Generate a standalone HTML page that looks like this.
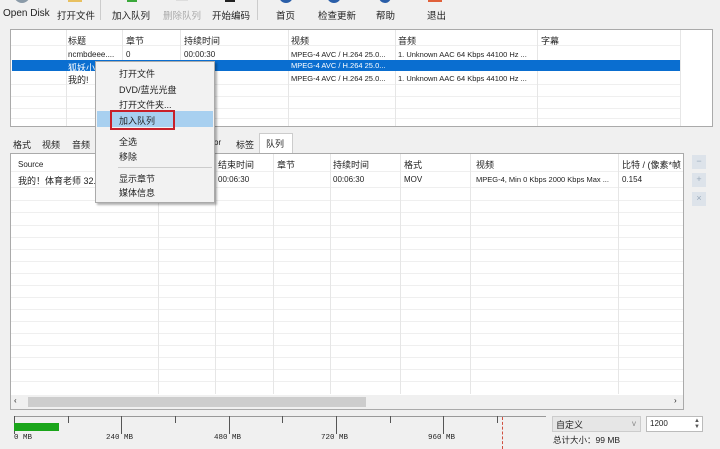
<!DOCTYPE html><html><head><meta charset="utf-8"><style>
*{margin:0;padding:0;box-sizing:border-box}
body{width:720px;height:449px;background:#f0f0f0;font-family:"Liberation Sans","Noto Sans CJK SC",sans-serif;font-size:9px;color:#222;position:relative;overflow:hidden}
.a{position:absolute;white-space:nowrap}
.tb{font-size:9.5px;top:8px}
.vl{position:absolute;width:1px;background:#e6e6e6}
.hl{position:absolute;height:1px;background:#efefef}
</style></head><body>
<!-- toolbar icons (cut off) -->
<div class="a" style="left:14px;top:-6px;width:16px;height:9px;border-radius:0 0 8px 8px;background:#8a9aa8"></div>
<div class="a" style="left:68px;top:-4px;width:14px;height:6px;background:#e8c060"></div>
<div class="a" style="left:127px;top:-4px;width:10px;height:6px;background:#3aa83a"></div>
<div class="a" style="left:176px;top:-4px;width:12px;height:5px;background:#ddd"></div>
<div class="a" style="left:225px;top:-4px;width:10px;height:6px;background:#222"></div>
<div class="a" style="left:279px;top:-6px;width:14px;height:9px;border-radius:0 0 7px 7px;background:#2a5ea8"></div>
<div class="a" style="left:327px;top:-6px;width:14px;height:9px;border-radius:0 0 7px 7px;background:#2a5ea8"></div>
<div class="a" style="left:379px;top:-6px;width:12px;height:9px;border-radius:0 0 6px 6px;background:#2a5ea8"></div>
<div class="a" style="left:428px;top:-4px;width:14px;height:6px;background:#e0603a"></div>
<div class="a tb" style="left:3px;font-size:10px">Open Disk</div>
<div class="a tb" style="left:57px">打开文件</div>
<div class="a" style="left:100px;top:0;width:1px;height:20px;background:#ccc"></div>
<div class="a tb" style="left:112px">加入队列</div>
<div class="a tb" style="left:163px;color:#aaa">删除队列</div>
<div class="a tb" style="left:212px">开始编码</div>
<div class="a" style="left:257px;top:0;width:1px;height:20px;background:#ccc"></div>
<div class="a tb" style="left:276px">首页</div>
<div class="a tb" style="left:318px">检查更新</div>
<div class="a tb" style="left:376px">帮助</div>
<div class="a tb" style="left:427px">退出</div>
<!-- top list -->
<div class="a" style="left:10px;top:29px;width:703px;height:98px;background:#fff;border:1px solid #aaa"></div>
<div class="hl" style="left:11px;top:45px;width:670px"></div>
<div class="hl" style="left:11px;top:84px;width:670px"></div>
<div class="hl" style="left:11px;top:96px;width:670px"></div>
<div class="hl" style="left:11px;top:108px;width:670px"></div>
<div class="hl" style="left:11px;top:118px;width:670px"></div>
<div class="vl" style="left:66px;top:30px;height:96px"></div>
<div class="vl" style="left:122px;top:30px;height:96px"></div>
<div class="vl" style="left:180px;top:30px;height:96px"></div>
<div class="vl" style="left:288px;top:30px;height:96px"></div>
<div class="vl" style="left:395px;top:30px;height:96px"></div>
<div class="vl" style="left:537px;top:30px;height:96px"></div>
<div class="vl" style="left:680px;top:30px;height:96px"></div>
<div class="a" style="left:12px;top:60px;width:668px;height:11px;background:#0a6ed0"></div>
<div class="a" style="left:68px;top:34px">标题</div><div class="a" style="left:126px;top:34px">章节</div><div class="a" style="left:184px;top:34px">持续时间</div><div class="a" style="left:291px;top:34px">视频</div><div class="a" style="left:398px;top:34px">音频</div><div class="a" style="left:541px;top:34px">字幕</div>
<div class="a" style="left:68px;top:50px;font-size:8px">ncmbdeee....</div><div class="a" style="left:126px;top:50px;font-size:8px">0</div><div class="a" style="left:184px;top:50px;font-size:8px">00:00:30</div><div class="a" style="left:291px;top:50px;font-size:7.5px">MPEG-4 AVC / H.264 25.0...</div><div class="a" style="left:398px;top:50px;font-size:7.5px">1. Unknown AAC  64 Kbps 44100 Hz ...</div>
<div class="a" style="left:68px;top:61px;color:#fff">狐妖小</div><div class="a" style="left:291px;top:61px;font-size:7.5px;color:#fff">MPEG-4 AVC / H.264 25.0...</div>
<div class="a" style="left:68px;top:73px">我的!</div><div class="a" style="left:291px;top:74px;font-size:7.5px">MPEG-4 AVC / H.264 25.0...</div><div class="a" style="left:398px;top:74px;font-size:7.5px">1. Unknown AAC  64 Kbps 44100 Hz ...</div>
<!-- tabs -->
<div class="a" style="left:13px;top:138px">格式</div><div class="a" style="left:42px;top:138px">视频</div><div class="a" style="left:72px;top:138px">音频</div><div class="a" style="left:210px;top:138px;font-size:8px">itor</div><div class="a" style="left:236px;top:138px">标签</div>
<div class="a" style="left:259px;top:133px;width:34px;height:20px;background:#fff;border:1px solid #ccc;border-bottom:none;padding:3px 0 0 6px">队列</div>
<!-- queue list -->
<div class="a" style="left:10px;top:153px;width:674px;height:257px;background:#fff;border:1px solid #aaa"></div>
<div class="hl" style="left:11px;top:171px;width:672px"></div>
<div class="hl" style="left:11px;top:187px;width:672px"></div>
<div class="hl" style="left:11px;top:200px;width:672px"></div>
<div class="hl" style="left:11px;top:212px;width:672px"></div>
<div class="hl" style="left:11px;top:225px;width:672px"></div><div class="hl" style="left:11px;top:237px;width:672px"></div><div class="hl" style="left:11px;top:249px;width:672px"></div><div class="hl" style="left:11px;top:261px;width:672px"></div><div class="hl" style="left:11px;top:273px;width:672px"></div><div class="hl" style="left:11px;top:285px;width:672px"></div><div class="hl" style="left:11px;top:297px;width:672px"></div><div class="hl" style="left:11px;top:309px;width:672px"></div><div class="hl" style="left:11px;top:321px;width:672px"></div><div class="hl" style="left:11px;top:333px;width:672px"></div><div class="hl" style="left:11px;top:345px;width:672px"></div><div class="hl" style="left:11px;top:357px;width:672px"></div><div class="hl" style="left:11px;top:369px;width:672px"></div><div class="hl" style="left:11px;top:381px;width:672px"></div>
<div class="vl" style="left:158px;top:154px;height:240px"></div><div class="vl" style="left:215px;top:154px;height:240px"></div><div class="vl" style="left:273px;top:154px;height:240px"></div><div class="vl" style="left:330px;top:154px;height:240px"></div><div class="vl" style="left:400px;top:154px;height:240px"></div><div class="vl" style="left:470px;top:154px;height:240px"></div><div class="vl" style="left:618px;top:154px;height:240px"></div>
<div class="a" style="left:18px;top:160px;font-size:8px">Source</div><div class="a" style="left:218px;top:158px">结束时间</div><div class="a" style="left:277px;top:158px">章节</div><div class="a" style="left:333px;top:158px">持续时间</div><div class="a" style="left:404px;top:158px">格式</div><div class="a" style="left:476px;top:158px">视频</div><div class="a" style="left:622px;top:158px">比特 / (像素*帧</div>
<div class="a" style="left:18px;top:174px">我的！体育老师 32.m</div><div class="a" style="left:218px;top:175px;font-size:8px">00:06:30</div><div class="a" style="left:333px;top:175px;font-size:8px">00:06:30</div><div class="a" style="left:404px;top:175px;font-size:8px">MOV</div><div class="a" style="left:476px;top:175px;font-size:7.5px">MPEG-4, Min 0 Kbps 2000 Kbps Max ...</div><div class="a" style="left:622px;top:175px;font-size:8px">0.154</div>
<div class="a" style="left:11px;top:395px;width:672px;height:14px;background:#f0f0f0"></div>
<div class="a" style="left:28px;top:397px;width:338px;height:10px;background:#cdcdcd"></div>
<div class="a" style="left:14px;top:396px;font-size:8px">‹</div><div class="a" style="left:674px;top:396px;font-size:8px">›</div>
<div class="a" style="left:692px;top:155px;width:14px;height:14px;background:#dde3ea;color:#9ab;text-align:center;line-height:13px">−</div>
<div class="a" style="left:692px;top:173px;width:14px;height:14px;background:#dde3ea;color:#9ab;text-align:center;line-height:13px">+</div>
<div class="a" style="left:692px;top:192px;width:14px;height:14px;background:#dde3ea;color:#9ab;text-align:center;line-height:13px">×</div>
<!-- context menu -->
<div class="a" style="left:95px;top:61px;width:120px;height:142px;background:#f2f2f2;border:1px solid #aaa;box-shadow:2px 2px 2px rgba(0,0,0,.3)"></div>
<div class="a" style="left:97px;top:111px;width:116px;height:16px;background:#a8d0f0"></div>
<div class="a" style="left:110px;top:110px;width:65px;height:20px;border:2px solid #c8202a"></div>
<div class="a" style="left:119px;top:67px">打开文件</div><div class="a" style="left:119px;top:83px">DVD/蓝光光盘</div><div class="a" style="left:119px;top:98px">打开文件夹...</div><div class="a" style="left:119px;top:114px">加入队列</div>
<div class="a" style="left:119px;top:135px">全选</div><div class="a" style="left:119px;top:150px">移除</div>
<div class="a" style="left:118px;top:167px;width:94px;height:1px;background:#ccc"></div>
<div class="a" style="left:119px;top:172px">显示章节</div><div class="a" style="left:119px;top:186px">媒体信息</div>
<!-- bottom ruler -->
<div class="a" style="left:14px;top:416px;width:532px;height:1px;background:#999"></div>
<div class="a" style="left:14px;top:416px;width:1px;height:18px;background:#555"></div>
<div class="a" style="left:68px;top:416px;width:1px;height:7px;background:#555"></div>
<div class="a" style="left:121px;top:416px;width:1px;height:18px;background:#555"></div>
<div class="a" style="left:175px;top:416px;width:1px;height:7px;background:#555"></div>
<div class="a" style="left:229px;top:416px;width:1px;height:18px;background:#555"></div>
<div class="a" style="left:282px;top:416px;width:1px;height:7px;background:#555"></div>
<div class="a" style="left:336px;top:416px;width:1px;height:18px;background:#555"></div>
<div class="a" style="left:390px;top:416px;width:1px;height:7px;background:#555"></div>
<div class="a" style="left:443px;top:416px;width:1px;height:18px;background:#555"></div>
<div class="a" style="left:497px;top:416px;width:1px;height:7px;background:#555"></div>
<div class="a" style="left:502px;top:417px;height:32px;border-left:1px dashed #d05040"></div>
<div class="a" style="left:14px;top:423px;width:45px;height:8px;background:#1aa51a"></div>
<div class="a" style="left:14px;top:434px;font-size:7.5px;font-family:'Liberation Mono',monospace">0 MB</div>
<div class="a" style="left:106px;top:434px;font-size:7.5px;font-family:'Liberation Mono',monospace">240 MB</div>
<div class="a" style="left:214px;top:434px;font-size:7.5px;font-family:'Liberation Mono',monospace">480 MB</div>
<div class="a" style="left:321px;top:434px;font-size:7.5px;font-family:'Liberation Mono',monospace">720 MB</div>
<div class="a" style="left:428px;top:434px;font-size:7.5px;font-family:'Liberation Mono',monospace">960 MB</div>
<div class="a" style="left:552px;top:416px;width:89px;height:16px;background:#e6e6e6;border:1px solid #ccc;padding:1px 0 0 3px">自定义<span style="position:absolute;right:4px;top:2px;color:#888;font-size:8px">v</span></div>
<div class="a" style="left:646px;top:416px;width:57px;height:16px;background:#fff;border:1px solid #bbb;padding:2px 0 0 3px;font-size:8px">1200<span style="position:absolute;right:2px;top:1px;font-size:6px;color:#555;line-height:6px">▲<br>▼</span></div>
<div class="a" style="left:553px;top:434px;font-size:8.5px">总计大小：99 MB</div>
</body></html>
